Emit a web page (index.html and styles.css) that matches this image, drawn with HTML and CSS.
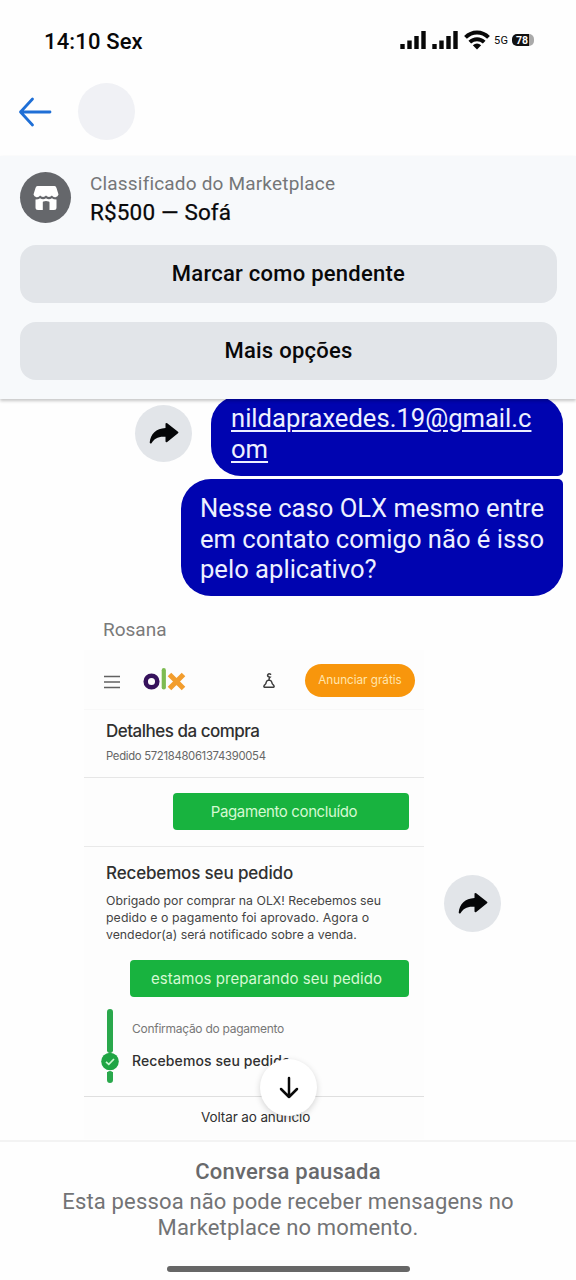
FILE: index.html
```html
<!DOCTYPE html>
<html lang="pt-BR">
<head>
<meta charset="utf-8">
<title>Conversa</title>
<link rel="stylesheet" href="styles.css">
</head>
<body>
<div class="screen">
  <header class="status">
    <span class="clock">14:10 Sex</span>
    <div class="status-icons">
      <svg class="signal" width="26" height="20" viewBox="0 0 26 20"><path d="M2.500 14V19M9.500 10.500V19M16.500 6V19M23.500 1V19" stroke="#080808" stroke-width="4.400" fill="none"/></svg>
      <svg class="signal" width="26" height="20" viewBox="0 0 26 20"><path d="M2.500 14V19M9.500 10.500V19M16.500 6V19M23.500 1V19" stroke="#080808" stroke-width="4.400" fill="none"/></svg>
      <svg class="wifi" width="26" height="20" viewBox="0 0 26 20"><path d="M1.500 7.400C8 .800 18 .800 24.500 7.400M5.800 12.200C10 8.200 16 8.200 20.200 12.200" stroke="#080808" stroke-width="3.900" fill="none"/><path d="M8.800 15.200Q13 11.800 17.200 15.200L13 19.600Z" fill="#080808"/></svg>
      <span class="net">5G</span>
      <span class="battery">78</span>
    </div>
  </header>
  <nav class="nav">
    <svg class="back" width="34" height="32" viewBox="0 0 34 32"><path d="M32 16H2.500M14.500 3L2.500 16L14.500 29" stroke="#1f6fd6" stroke-width="2.800" stroke-linecap="round" stroke-linejoin="round" fill="none"/></svg>
    <span class="avatar"></span>
  </nav>
  <section class="listing">
    <div class="listing-head">
      <span class="shop">
        <svg width="26" height="26" viewBox="0 0 26 26"><path d="M4.500 1H21.500Q23 1 23.500 3L25.500 9.500A3.600 3.600 0 0 1 18.900 10.500A3.700 3.700 0 0 1 13 10.500A3.700 3.700 0 0 1 7.100 10.500A3.600 3.600 0 0 1 .500 9.500L2.500 3Q3 1 4.500 1Z" fill="#fff"/><path d="M2.500 14.500Q5.500 14.500 7.100 13.200Q10 15.200 13 13.200Q16 15.200 18.900 13.200Q20.500 14.500 23.500 14.500V22.500Q23.500 25 21 25H16.500V17.500Q16.500 16 13 16T9.800 17.500V25H5Q2.500 25 2.500 22.500Z" fill="#fff"/></svg>
      </span>
      <div class="listing-text">
        <div class="listing-label">Classificado do Marketplace</div>
        <div class="listing-title">R$500 — Sofá</div>
      </div>
    </div>
    <button class="action pending">Marcar como pendente</button>
    <button class="action more">Mais opções</button>
  </section>
  <main class="chat">
    <div class="row sent">
      <span class="forward"><svg width="30" height="23" viewBox="0 0 30 23"><path d="M16.500 1.600Q17 .500 18.200 1.300L29 9.700Q30 10.500 29 11.300L18.200 20Q17 20.700 16.500 19.500V14.800C9 14.200 5.500 16.500 2.500 21.300Q1 22.200.700 20.500C1.500 12 7 6.600 16.500 6Z" fill="#050608"/></svg></span>
      <div class="bubble first"><span class="mail">nildapraxedes.19@gmail.c<br>om</span></div>
    </div>
    <div class="row sent second-row">
      <div class="bubble second">Nesse caso OLX mesmo entre<br>em contato comigo não é isso<br>pelo aplicativo?</div>
    </div>
    <div class="sender">Rosana</div>
    <div class="row received">
      <article class="card">
        <div class="card-top">
          <svg class="menu" width="18" height="14" viewBox="0 0 18 14"><path d="M1 1.500H17M1 7H17M1 12.500H17" stroke="#616161" stroke-width="1.500"/></svg>
          <svg class="olx" width="44" height="26" viewBox="0 0 44 26"><circle cx="8.500" cy="15.500" r="5.800" fill="none" stroke="#36125c" stroke-width="4.500"/><path d="M20.800 4.200V21.500" stroke="#7dbb52" stroke-width="4.200" stroke-linecap="round"/><path d="M26.500 8.500L40.500 22.500M40.500 8.500L26.500 22.500" stroke="#f29d2d" stroke-width="5"/></svg>
          <svg class="bell" width="14" height="18" viewBox="0 0 14 18"><path d="M8.600 2.200Q6 1.200 5.600 3.200Q5.500 4.600 8 5.200Q7 6 7 8M7 8Q4.500 8.500 4.300 10Q4.200 12 2.300 13.300Q1.300 14.800 2.600 15.300H11.400Q12.700 14.800 11.700 13.300Q9.900 12 9.700 10Q9.500 8.500 7 8" fill="none" stroke="#3c3c3c" stroke-width="1.500" stroke-linecap="round"/></svg>
          <span class="announce">Anunciar grátis</span>
        </div>
        <div class="card-title">
          <div class="h details">Detalhes da compra</div>
          <div class="order">Pedido 5721848061374390054</div>
        </div>
        <div class="paid-wrap"><span class="green paid">Pagamento concluído</span></div>
        <div class="received-block">
          <div class="h got">Recebemos seu pedido</div>
          <p class="thanks">Obrigado por comprar na OLX! Recebemos seu<br><span class="t2">pedido e o pagamento foi aprovado. Agora o</span><br>vendedor(a) será notificado sobre a venda.</p>
          <span class="green preparing">estamos preparando seu pedido</span>
          <div class="steps">
            <svg width="20" height="76" viewBox="0 0 20 76"><path d="M10 4V42M10 66V72" stroke="#2aa84c" stroke-width="6" stroke-linecap="round"/><path d="M10 40V43M10 64V67" stroke="#2aa84c" stroke-width="6"/><circle cx="10" cy="53.500" r="8.800" fill="#20a544"/><path d="M6 53.800L8.800 56.300L14 51" stroke="#c9f7d0" stroke-width="1.700" fill="none"/></svg>
            <div class="step-text"><div class="step-old">Confirmação do pagamento</div><div class="step-now">Recebemos seu pedido</div></div>
          </div>
        </div>
        <div class="card-foot">Voltar ao anúncio</div>
      </article>
      <span class="forward side"><svg width="30" height="23" viewBox="0 0 30 23"><path d="M16.500 1.600Q17 .500 18.200 1.300L29 9.700Q30 10.500 29 11.300L18.200 20Q17 20.700 16.500 19.500V14.800C9 14.200 5.500 16.500 2.500 21.300Q1 22.200.700 20.500C1.500 12 7 6.600 16.500 6Z" fill="#050608"/></svg></span>
    </div>
    <span class="scroll-down"><svg width="20" height="24" viewBox="0 0 20 24"><path d="M10 2V21M2 13L10 21L18 13" stroke="#0a0a0a" stroke-width="2.500" stroke-linecap="round" stroke-linejoin="round" fill="none"/></svg></span>
  </main>
  <footer class="paused">
    <div class="paused-title">Conversa pausada</div>
    <div class="paused-text">Esta pessoa não pode receber mensagens no<br>Marketplace no momento.</div>
    <div class="home"></div>
  </footer>
</div>
</body>
</html>
```
FILE: styles.css
```css
* { box-sizing: border-box; }
body { margin: 0; background: #fefefe; font-family: Roboto, "Liberation Sans", sans-serif; color: #080809; }
svg { display: block; flex: none; }
.screen { width: 576px; height: 1280px; display: flex; flex-direction: column; overflow: hidden; white-space: nowrap; }

.status { height: 80px; padding: 26px 42px 0 44px; display: flex; justify-content: space-between; align-items: flex-start; }
.clock { font-size: 22px; line-height: 31px; font-weight: 500; letter-spacing: .15px; }
.status-icons { display: flex; align-items: center; height: 20px; margin-top: 4px; }
.signal { margin-right: 6px; }
.wifi { margin-right: 4px; }
.net { font-size: 11px; width: 18px; letter-spacing: .2px; }
.battery { width: 22px; height: 12px; border-radius: 5px; background: linear-gradient(90deg, #111 78%, #aaa 78%); color: #fff; font-size: 10.500px; line-height: 13px; font-weight: 700; text-align: center; padding-right: 2px; }

.nav { height: 76px; padding: 3px 0 0 18px; display: flex; align-items: flex-start; }
.back { margin-top: 13px; }
.avatar { width: 57px; height: 57px; margin-left: 26px; border-radius: 50%; background: #f0f1f5; }

.listing { height: 243px; padding: 16px 19px 0 20px; background: #f7f9fb; box-shadow: 0 2px 3px rgba(0,0,0,.22); position: relative; z-index: 2; }
.listing-head { display: flex; height: 73px; }
.shop { width: 51px; height: 51px; border-radius: 50%; background: #65676b; display: flex; align-items: center; justify-content: center; }
.listing-text { margin-left: 19px; margin-top: -1px; }
.listing-label { font-size: 19px; line-height: 26px; color: #747678; letter-spacing: .18px; }
.listing-title { font-size: 22.500px; line-height: 31px; letter-spacing: .15px; -webkit-text-stroke: .25px #080809; }
.action { display: block; width: 100%; height: 58px; padding: 0; border: 0; border-radius: 16px; background: #e2e5e9; font: 500 22px/58px Roboto, sans-serif; color: #080809; letter-spacing: .25px; }
.more { margin-top: 19px; }

.chat { height: 741px; position: relative; overflow: hidden; }
.row { display: flex; }
.sent { justify-content: flex-end; padding-right: 13px; }
.forward { width: 57px; height: 57px; border-radius: 50%; background: #e2e5e9; display: flex; align-items: center; justify-content: center; flex: none; margin: 6px 19px 0 0; }
.bubble { background: #0004b0; color: #edf0ff; font-size: 25.600px; line-height: 30.500px; }
.first { width: 352px; height: 80px; padding: 7px 0 0 20px; border-radius: 28px 28px 5px 30px; margin-top: -3px; }
.mail { text-decoration: underline; text-decoration-thickness: 1.500px; text-underline-offset: 3px; }
.second-row { margin-top: 3px; }
.second { width: 382px; height: 117px; padding: 14px 0 0 19px; border-radius: 30px 5px 30px 30px; }
.sender { height: 54px; padding: 21px 0 0 103px; font-size: 19px; line-height: 26px; color: #7a7a7a; }

.card { width: 340px; height: 489px; margin-left: 84px; background: #fdfdfd; font-family: Inter, "Open Sans", sans-serif; color: #303030; }
.card-top { height: 60px; display: flex; padding: 14px 9px 0 19px; align-items: flex-start; border-bottom: 1px solid #f8f8f8; }
.menu { margin-top: 11px; }
.olx { margin: 2px 0 0 22px; }
.bell { margin: 8px 0 0 75px; }
.announce { width: 110px; height: 33px; border-radius: 17px; background: #f8960c; color: #ffe5ad; font-size: 11.700px; line-height: 33px; text-align: center; margin-left: auto; }
.card-title { height: 68px; padding: 9px 0 0 22px; border-bottom: 1px solid #e6e6e6; }
.h { font-size: 17px; line-height: 24px; font-weight: 500; }
.details { letter-spacing: -.5px; }
.got { margin-left: 6px; letter-spacing: -.15px; }
.order { font-size: 11.300px; line-height: 18px; margin-top: 4px; color: #666; letter-spacing: -.3px; }
.paid-wrap { height: 69px; padding: 15px 15px 0 89px; border-bottom: 1px solid #e9e9e9; }
.green { display: block; height: 37px; border-radius: 4px; background: #18b33f; color: #d5f9d2; font-size: 15px; line-height: 38px; text-align: center; }
.paid { padding-right: 14px; letter-spacing: -.38px; }
.received-block { height: 249px; padding: 14px 15px 0 16px; }
.thanks { margin: 7px 0 0 6px; font-size: 12.300px; line-height: 17px; color: #444; }
.t2 { letter-spacing: .09px; }
.preparing { margin: 17px 0 0 30px; padding-right: 6px; letter-spacing: .06px; }
.steps { display: flex; margin-top: 11px; }
.step-text { margin-left: 12px; padding-top: 11px; }
.step-old { font-size: 12px; line-height: 20px; color: #777; letter-spacing: -.27px; }
.step-now { font-size: 14px; line-height: 22px; margin-top: 11px; font-weight: 500; letter-spacing: .1px; }
.card-foot { height: 43px; border-top: 1px solid #dfdfdf; padding: 10px 0 0 117px; font-size: 13.500px; line-height: 21px; letter-spacing: -.12px; }
.side { margin: 225px 0 0 20px; }
.scroll-down { position: absolute; left: 260px; top: 660px; width: 57px; height: 57px; border-radius: 50%; background: #fff; display: flex; align-items: center; justify-content: center; box-shadow: 0 2px 6px rgba(0,0,0,.17); }

.paused { height: 140px; border-top: 2px solid #f3f3f3; padding-top: 16px; text-align: center; color: #68696b; background: #fefefe; position: relative; }
.paused-title { font-size: 22px; line-height: 28px; font-weight: 500; letter-spacing: .23px; }
.paused-text { font-size: 22px; line-height: 26px; margin-top: 3px; color: #727375; letter-spacing: .16px; }
.home { width: 243px; height: 6px; margin: 25px auto 0; border-radius: 3px; background: #666; }
```
